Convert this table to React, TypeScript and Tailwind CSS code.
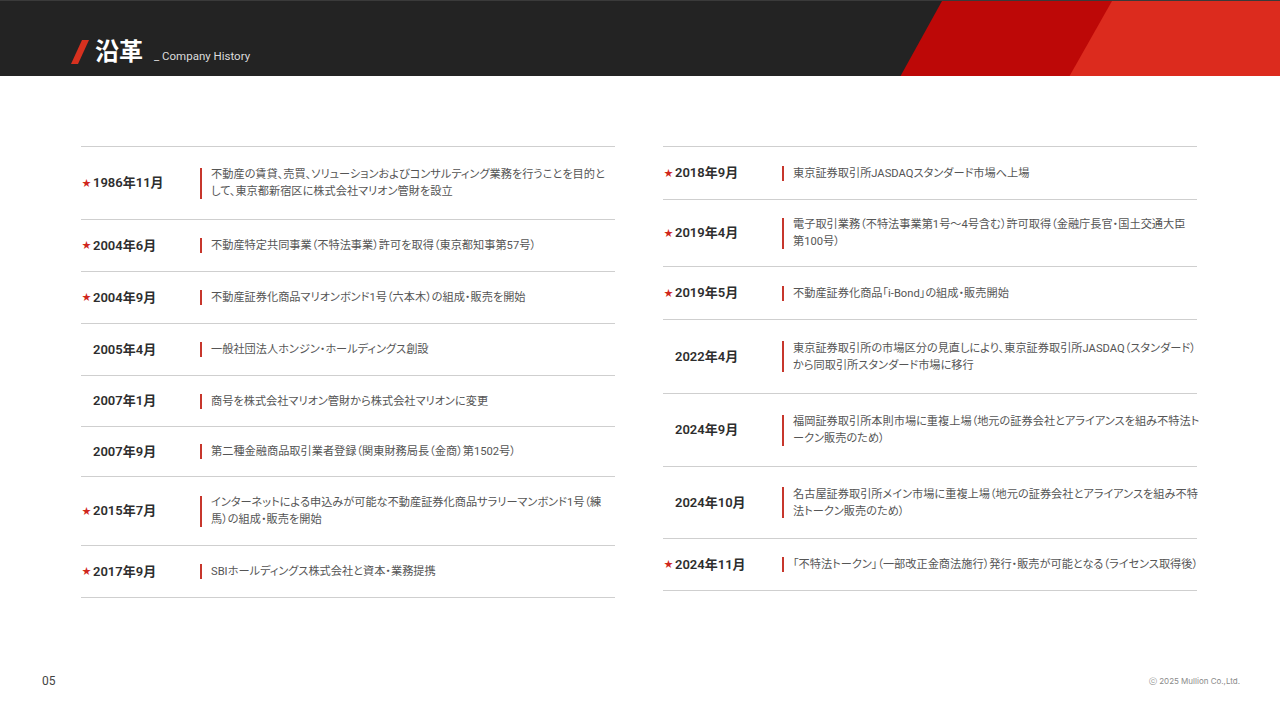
type Item = {
  date: string;
  star: boolean;
  lines: string[];
  h: string;
};

const left: Item[] = [
  {
    date: "1986年11月",
    star: true,
    lines: [
      "不動産の賃貸、売買、ソリューションおよびコンサルティング業務を行うことを目的と",
      "して、東京都新宿区に株式会社マリオン管財を設立",
    ],
    h: "h-[73px]",
  },
  { date: "2004年6月", star: true, lines: ["不動産特定共同事業（不特法事業）許可を取得（東京都知事第57号）"], h: "h-[52px]" },
  { date: "2004年9月", star: true, lines: ["不動産証券化商品マリオンボンド1号（六本木）の組成・販売を開始"], h: "h-[52px]" },
  { date: "2005年4月", star: false, lines: ["一般社団法人ホンジン・ホールディングス創設"], h: "h-[52px]" },
  { date: "2007年1月", star: false, lines: ["商号を株式会社マリオン管財から株式会社マリオンに変更"], h: "h-[51px]" },
  { date: "2007年9月", star: false, lines: ["第二種金融商品取引業者登録（関東財務局長（金商）第1502号）"], h: "h-[50px]" },
  {
    date: "2015年7月",
    star: true,
    lines: ["インターネットによる申込みが可能な不動産証券化商品サラリーマンボンド1号（練", "馬）の組成・販売を開始"],
    h: "h-[69px]",
  },
  { date: "2017年9月", star: true, lines: ["SBIホールディングス株式会社と資本・業務提携"], h: "h-[52px]" },
];

const right: Item[] = [
  { date: "2018年9月", star: true, lines: ["東京証券取引所JASDAQスタンダード市場へ上場"], h: "h-[53px]" },
  {
    date: "2019年4月",
    star: true,
    lines: ["電子取引業務（不特法事業第1号〜4号含む）許可取得（金融庁長官・国土交通大臣", "第100号）"],
    h: "h-[67px]",
  },
  { date: "2019年5月", star: true, lines: ["不動産証券化商品「i-Bond」の組成・販売開始"], h: "h-[53px]" },
  {
    date: "2022年4月",
    star: false,
    lines: ["東京証券取引所の市場区分の見直しにより、東京証券取引所JASDAQ（スタンダード）", "から同取引所スタンダード市場に移行"],
    h: "h-[74px]",
  },
  {
    date: "2024年9月",
    star: false,
    lines: ["福岡証券取引所本則市場に重複上場（地元の証券会社とアライアンスを組み不特法ト", "ークン販売のため）"],
    h: "h-[73px]",
  },
  {
    date: "2024年10月",
    star: false,
    lines: ["名古屋証券取引所メイン市場に重複上場（地元の証券会社とアライアンスを組み不特", "法トークン販売のため）"],
    h: "h-[72px]",
  },
  { date: "2024年11月", star: true, lines: ["「不特法トークン」（一部改正金商法施行）発行・販売が可能となる（ライセンス取得後）"], h: "h-[52px]" },
];

function Row({ item }: { item: Item }) {
  return (
    <div className={`flex items-center border-b border-[#cfcfcf] ${item.h}`}>
      <div className="flex w-[119px] shrink-0 items-center">
        <span className={`w-[12px] pl-[1px] text-[9px] leading-none ${item.star ? "text-[#d0261c]" : "text-transparent"}`}>★</span>
        <span className="text-[13px] font-semibold text-[#2e2e2e] [font-feature-settings:'palt']">{item.date}</span>
      </div>
      <div className={`w-[2px] shrink-0 bg-[#c7362c] ${item.lines.length > 1 ? "h-[31px]" : "h-[15px]"}`} />
      <div className="pl-[9px] text-[11.2px] leading-[17px] whitespace-nowrap text-[#555] [font-feature-settings:'palt']">
        {item.lines.map((l, i) => (
          <div key={i}>{l}</div>
        ))}
      </div>
    </div>
  );
}

export default function App() {
  return (
    <div
      className="flex h-[720px] w-[1280px] flex-col bg-white"
      style={{ fontFamily: "Roboto, 'Noto Sans CJK JP', sans-serif" }}
    >
      <header className="relative h-[76px] shrink-0 overflow-hidden border-t border-[#3a3a3a] bg-[#232323]">
        <svg className="absolute right-0 top-0" width="380" height="76" viewBox="0 0 380 76">
          <polygon points="42,0 380,0 380,76 0,76" fill="#bd0807" />
          <polygon points="212,0 380,0 380,76 169,76" fill="#dc2b1e" />
        </svg>
        <div className="flex items-end pl-[71px] pt-[37px]">
          <svg width="19" height="24" viewBox="0 0 19 24" className="mb-[2px]">
            <polygon points="11,0 18,0 7,24 0,24" fill="#d7311f" />
          </svg>
          <span className="ml-[5px] text-[24px] font-bold leading-[28px] text-white">沿革</span>
          <span className="mb-[4px] ml-[11px] text-[11.5px] leading-none text-[#dcdcdc]">_ Company History</span>
        </div>
      </header>

      <main className="ml-[81px] mt-[70px] grid w-[1116px] grid-cols-2 items-start gap-x-12">
        <div className="border-t border-[#cfcfcf]">
          {left.map((it) => (
            <Row key={it.date} item={it} />
          ))}
        </div>
        <div className="border-t border-[#cfcfcf]">
          {right.map((it) => (
            <Row key={it.date} item={it} />
          ))}
        </div>
      </main>

      <footer className="mt-auto flex items-center justify-between pb-[30px] pl-[42px] pr-[40px]">
        <span className="text-[12px] text-[#444]">05</span>
        <span className="text-[8px] text-[#8a8a8a]" style={{ fontFamily: "Inter, sans-serif" }}>
          ⓒ 2025 Mullion Co.,Ltd.
        </span>
      </footer>
    </div>
  );
}
